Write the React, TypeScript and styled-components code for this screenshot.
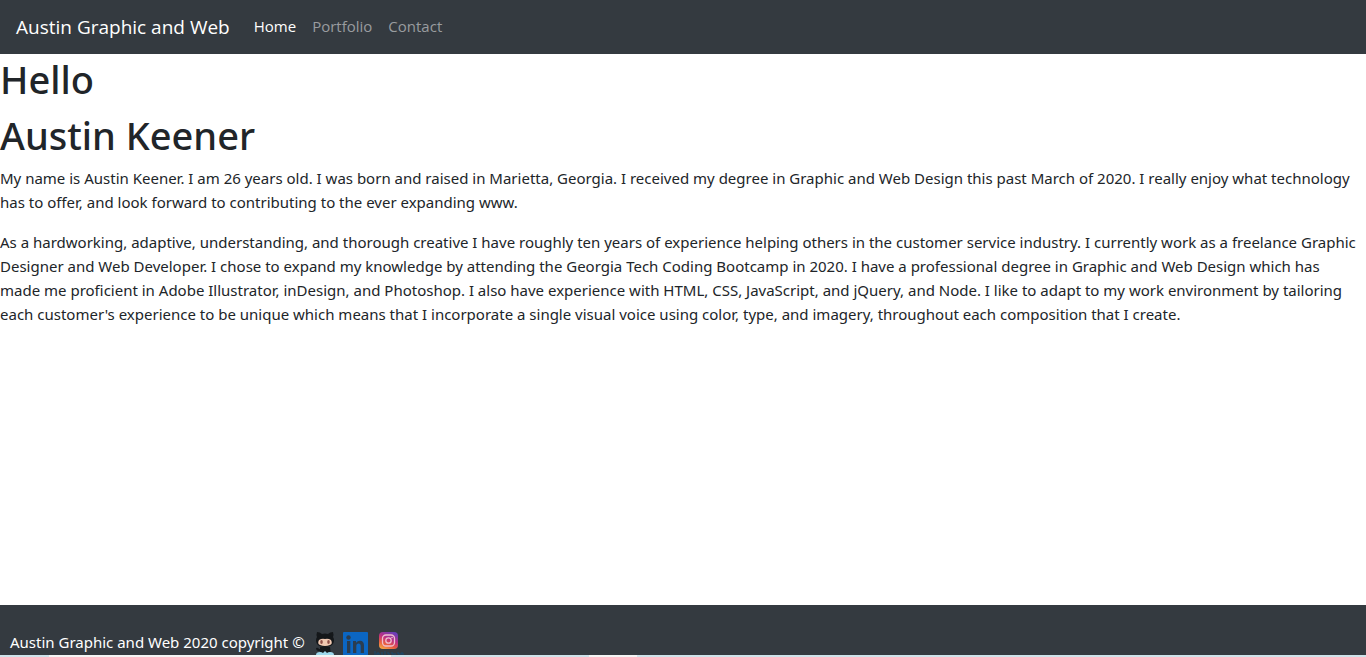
import React from "react";
import styled, { createGlobalStyle } from "styled-components";

const Global = createGlobalStyle`
  *, *::before, *::after { box-sizing: border-box; }
  body {
    margin: 0;
    background: #fff;
    color: #212529;
    font: 400 15px/24px "Noto Sans", sans-serif;
  }
`;

const Page = styled.div`
  display: flex;
  flex-direction: column;
  min-height: 100vh;
`;

const Navbar = styled.nav`
  display: flex;
  align-items: center;
  gap: 16px;
  padding: 6px 16px 8px;
  background: #343a40;
  font-family: "Open Sans", sans-serif;
`;

const Brand = styled.a`
  padding-top: 2px;
  color: #fff;
  font-size: 19px;
  line-height: 30px;
  text-decoration: none;
  white-space: nowrap;
`;

const NavList = styled.ul`
  display: flex;
  margin: 0;
  padding: 0;
  list-style: none;
`;

const NavLink = styled.a<{ $active?: boolean }>`
  display: block;
  padding: 8px;
  color: ${(p) => (p.$active ? "#fff" : "#999c9f")};
  text-decoration: none;
`;

const Main = styled.main`
  flex: 1;
`;

const Heading = styled.h1`
  margin: 0;
  padding: 1px 0 7px;
  font-size: 38px;
  font-weight: 500;
  line-height: 48px;
`;

const Paragraph = styled.p`
  margin: 0 0 16px;
  padding-right: 8px;
`;

const Footer = styled.footer`
  display: flex;
  align-items: flex-start;
  height: 50px;
  padding: 26px 10px 0;
  overflow: hidden;
  background: #343a40;
  color: #fff;
`;

const Copyright = styled.span`
  line-height: 22px;
`;

const Socials = styled.div`
  display: flex;
  gap: 6px;
  margin-left: 8px;
`;

const SocialLink = styled.a`
  display: block;

  svg {
    display: block;
  }
`;

const BottomEdge = styled.div`
  height: 2px;
  background: linear-gradient(
    to right,
    #cfe2ea 0 49px,
    #f4f4f4 49px 391px,
    #cfe2ea 391px 589px,
    #f4f4f4 589px 637px,
    #cfe2ea 637px
  );
`;

const GithubMark = () => (
  <svg width="24" height="24" viewBox="0 0 24 24" role="img" aria-label="GitHub">
    <path d="M7 16 H17 L18 24 H7Z" fill="#14171a" />
    <path d="M3 17 Q5 16 6 18 L9 18 V20 H6 Q3 20 3 17Z" fill="#14171a" />
    <path d="M3 24 Q3 21 7 21 Q9 21 10 22 L12 20 L14 22 Q15 21 17 21 Q21 21 21 24Z" fill="#9dd8ec" />
    <path d="M4 1 Q7 1 9 3 Q12 2 15 3 Q17 1 20 1 Q21 4 20 6 Q22 9 20 13 Q18 16 12 16 Q6 16 4 13 Q2 9 4 6 Q3 4 4 1Z" fill="#14171a" />
    <path d="M6 9 Q9 7 12 8 Q15 7 18 9 Q20 13 17 14 Q12 16 7 14 Q4 13 6 9Z" fill="#f0c8b1" />
    <ellipse cx="8.5" cy="11" rx="1.3" ry="2" fill="#8f5048" />
    <ellipse cx="15.5" cy="11" rx="1.3" ry="2" fill="#8f5048" />
  </svg>
);

const LinkedinMark = () => (
  <svg width="25" height="24" viewBox="0 0 25 24" role="img" aria-label="LinkedIn">
    <path d="M0 24 V2 Q0 1 1 1 H24 Q25 1 25 2 V24Z" fill="#0b66c3" />
    <g fill="#2b3d50">
      <circle cx="5.5" cy="6.5" r="2.2" />
      <path d="M4 10 H7.3 V22 H4Z M10 10 H13 V11.7 Q14.5 9.7 17 9.7 Q21 9.7 21 14.5 V22 H17.7 V15.3 Q17.7 12.5 15.6 12.5 Q13.3 12.5 13.3 15.3 V22 H10Z" />
    </g>
  </svg>
);

const InstagramMark = () => (
  <svg width="30" height="24" viewBox="0 0 30 24" role="img" aria-label="Instagram">
    <defs>
      <linearGradient id="instagram-fill" x1="0.2" y1="1" x2="0.7" y2="0">
        <stop offset="0" stopColor="#f4a545" />
        <stop offset="0.3" stopColor="#e85c40" />
        <stop offset="0.6" stopColor="#bd2f82" />
        <stop offset="1" stopColor="#6a3fb8" />
      </linearGradient>
    </defs>
    <rect x="5" y="1" width="19" height="17" rx="4" fill="url(#instagram-fill)" />
    <g fill="none" stroke="#eebfd0" strokeWidth="1.3">
      <rect x="8.5" y="4" width="12" height="11" rx="3.5" />
      <circle cx="14.5" cy="9.5" r="2.7" />
    </g>
    <circle cx="18" cy="6.5" r="0.8" fill="#eebfd0" />
    <path d="M1 20 V24 M3 24 V22 H5 V24 M7 22 H9 M7 24 H9 M11 20 V24 M13 22 H15 V24 M17 22 H19 V24 M21 22 V24 M23 22 H25 V24 M27 24 V22 H29 V24" fill="none" stroke="#174a70" strokeWidth="1" />
  </svg>
);

const App = () => (
  <Page>
    <Global />
    <Navbar>
      <Brand href="#home">Austin Graphic and Web</Brand>
      <NavList>
        <li><NavLink href="#home" $active>Home</NavLink></li>
        <li><NavLink href="#portfolio">Portfolio</NavLink></li>
        <li><NavLink href="#contact">Contact</NavLink></li>
      </NavList>
    </Navbar>
    <Main>
      <Heading>Hello</Heading>
      <Heading>Austin Keener</Heading>
      <Paragraph>
        My name is Austin Keener. I am 26 years old. I was born and raised in Marietta, Georgia. I received my degree in Graphic and Web Design this past March of 2020. I really enjoy what technology has to offer, and look forward to contributing to the ever expanding www.
      </Paragraph>
      <Paragraph>
        As a hardworking, adaptive, understanding, and thorough creative I have roughly ten years of experience helping others in the customer service industry. I currently work as a freelance Graphic Designer and Web Developer. I chose to expand my knowledge by attending the Georgia Tech Coding Bootcamp in 2020. I have a professional degree in Graphic and Web Design which has made me proficient in Adobe Illustrator, inDesign, and Photoshop. I also have experience with HTML, CSS, JavaScript, and jQuery, and Node. I like to adapt to my work environment by tailoring each customer's experience to be unique which means that I incorporate a single visual voice using color, type, and imagery, throughout each composition that I create.
      </Paragraph>
    </Main>
    <Footer>
      <Copyright>Austin Graphic and Web 2020 copyright ©</Copyright>
      <Socials>
        <SocialLink href="#github"><GithubMark /></SocialLink>
        <SocialLink href="#linkedin"><LinkedinMark /></SocialLink>
        <SocialLink href="#instagram"><InstagramMark /></SocialLink>
      </Socials>
    </Footer>
    <BottomEdge />
  </Page>
);

export default App;
